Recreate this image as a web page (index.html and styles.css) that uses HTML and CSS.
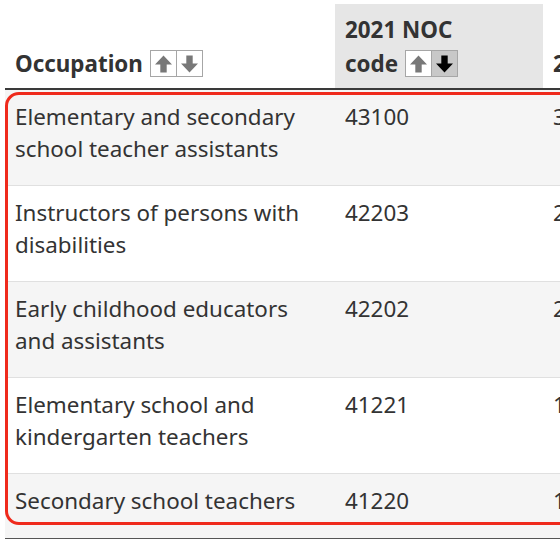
FILE: index.html
```html
<!DOCTYPE html>
<html lang="en">
<head>
<meta charset="utf-8">
<title>Occupations</title>
<link rel="stylesheet" href="styles.css">
</head>
<body>
<div class="wrap">
  <table class="tbl">
    <colgroup>
      <col class="w1"><col class="w2"><col class="w3">
    </colgroup>
    <thead>
      <tr>
        <th class="h1"><span class="nw">Occupation <span class="sort"><span class="btn"><svg viewBox="0 0 16 18" class="ar"><polygon points="8,1 16,9.5 11,9.5 11,17 5,17 5,9.5 0,9.5"/></svg></span><span class="btn"><svg viewBox="0 0 16 18" class="ar"><polygon points="8,17 16,8.5 11,8.5 11,1 5,1 5,8.5 0,8.5"/></svg></span></span></span></th>
        <th class="h2">2021 NOC <span class="nw">code <span class="sort"><span class="btn"><svg viewBox="0 0 16 18" class="ar"><polygon points="8,1 16,9.5 11,9.5 11,17 5,17 5,9.5 0,9.5"/></svg></span><span class="btn on"><svg viewBox="0 0 16 18" class="ar"><polygon points="8,17 16,8.5 11,8.5 11,1 5,1 5,8.5 0,8.5"/></svg></span></span></span></th>
        <th class="h3">2016 NOC code</th>
      </tr>
    </thead>
    <tbody>
      <tr><td>Elementary and secondary school teacher assistants</td><td>43100</td><td>3,560</td></tr>
      <tr><td>Instructors of persons with disabilities</td><td>42203</td><td>2,780</td></tr>
      <tr><td>Early childhood educators and assistants</td><td>42202</td><td>2,310</td></tr>
      <tr><td>Elementary school and kindergarten teachers</td><td>41221</td><td>1,940</td></tr>
      <tr><td>Secondary school teachers</td><td>41220</td><td>1,620</td></tr>
    </tbody>
  </table>
  <div class="highlight"></div>
</div>
</body>
</html>
```
FILE: styles.css
```css
html, body {
  margin: 0;
  padding: 0;
  background: #fff;
}
.wrap {
  position: relative;
  width: 560px;
  height: 560px;
  overflow: hidden;
  font-family: "Noto Sans", "Open Sans", sans-serif;
  color: #333;
}
.tbl {
  table-layout: fixed;
  width: 738px;
  margin: 4px 0 0 5px;
  border-collapse: collapse;
  font-size: 22.4px;
}
.w1 { width: 330px; }
.w2 { width: 208px; }
.w3 { width: 200px; }
th {
  text-align: left;
  font-weight: 700;
  line-height: 34px;
  padding: 9px 10px 7px;
  vertical-align: bottom;
  border-bottom: 2px solid #3a3a3a;
}
.h2 {
  background: #e6e6e6;
}
.nw { white-space: nowrap; }
.sort {
  display: inline-flex;
  vertical-align: top;
  margin-top: 3px;
  margin-left: 1px;
  border: 1px solid #a6a6a6;
}
.btn {
  display: flex;
  align-items: center;
  justify-content: center;
  width: 25px;
  height: 25px;
  background: #fff;
}
.btn + .btn {
  border-left: 1px solid #a6a6a6;
}
.ar {
  width: 17px;
  height: 20px;
  fill: #787878;
}
.btn.on {
  background: #c8c8c8;
}
.btn.on .ar {
  fill: #000;
}
td {
  line-height: 32px;
  padding: 11px 10px 20px;
  vertical-align: top;
  border-bottom: 1px solid #e0e0e0;
}
tbody tr:nth-child(odd) td {
  background: #f5f5f5;
}
tbody tr:last-child td {
  padding-bottom: 21px;
  border-bottom: 1px solid #555;
}
.highlight {
  position: absolute;
  left: 5px;
  top: 92px;
  width: 620px;
  height: 427px;
  border: 3px solid #ef2a1c;
  border-radius: 14px;
}
```
